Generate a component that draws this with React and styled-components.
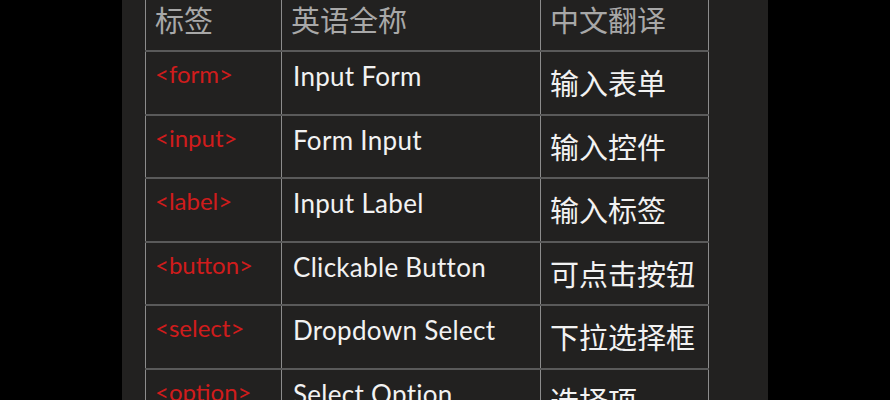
import styled, { createGlobalStyle } from "styled-components";

const rows = [
  { tag: "<form>", en: "Input Form", zh: "输入表单" },
  { tag: "<input>", en: "Form Input", zh: "输入控件" },
  { tag: "<label>", en: "Input Label", zh: "输入标签" },
  { tag: "<button>", en: "Clickable Button", zh: "可点击按钮" },
  { tag: "<select>", en: "Dropdown Select", zh: "下拉选择框" },
  { tag: "<option>", en: "Select Option", zh: "选择项" },
];

export default function App() {
  return (
    <>
      <GlobalStyle />
      <Page>
        <Panel>
          <Table>
            <thead>
              <Row $height={51}>
                <HeadCell>标签</HeadCell>
                <HeadCell>英语全称</HeadCell>
                <HeadCell>中文翻译</HeadCell>
              </Row>
            </thead>
            <tbody>
              {rows.map((row) => (
                <Row key={row.tag}>
                  <TagCell>{row.tag}</TagCell>
                  <EnCell>{row.en}</EnCell>
                  <ZhCell>{row.zh}</ZhCell>
                </Row>
              ))}
            </tbody>
          </Table>
        </Panel>
      </Page>
    </>
  );
}

const GlobalStyle = createGlobalStyle`
  html, body {
    margin: 0;
    padding: 0;
    background: #000;
    overflow: hidden;
  }
`;

const Page = styled.div`
  width: 890px;
  height: 400px;
  background: #000;
  overflow: hidden;
  display: flex;
`;

const Panel = styled.div`
  margin-left: 122px;
  width: 646px;
  height: 400px;
  padding-left: 23px;
  box-sizing: border-box;
  background: #222120;
  overflow: hidden;
`;

const Table = styled.table`
  border-collapse: collapse;
  table-layout: fixed;
  width: 563px;
`;

const Row = styled.tr`
  height: ${(props) => props.$height || 63.5}px;
`;

const Cell = styled.td`
  box-sizing: border-box;
  vertical-align: top;
  border-left: 1px solid #8c8c8c;
  border-right: 1px solid #8c8c8c;
  border-bottom: 2px solid #5a5a5a;
  padding: 0 0 0 9px;
  white-space: nowrap;

  &:nth-child(1) {
    width: 136px;
  }
  &:nth-child(2) {
    width: 259px;
  }
  &:nth-child(3) {
    width: 168px;
  }
`;

const HeadCell = styled(Cell).attrs({ as: "th" })`
  text-align: left;
  font-weight: normal;
  font-family: "Noto Sans CJK SC", sans-serif;
  font-size: 29px;
  line-height: 34px;
  color: #a8a8a8;
  padding-top: 2px;
`;

const TagCell = styled(Cell)`
  font-family: Lato, "Open Sans", sans-serif;
  font-size: 24px;
  line-height: 28px;
  color: #d01c1c;
  padding-top: 8px;
`;

const EnCell = styled(Cell)`
  font-family: Lato, "Open Sans", sans-serif;
  font-size: 26px;
  line-height: 30px;
  letter-spacing: 0.3px;
  color: #f2f2f2;
  padding-top: 9px;
  padding-left: 11px;
`;

const ZhCell = styled(Cell)`
  font-family: "Noto Sans CJK SC", sans-serif;
  font-size: 29px;
  line-height: 34px;
  color: #f2f2f2;
  padding-top: 13px;
`;
